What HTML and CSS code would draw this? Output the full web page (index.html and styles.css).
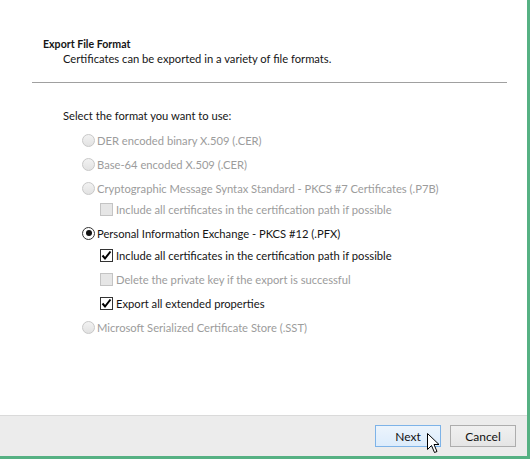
FILE: index.html
```html
<!DOCTYPE html>
<html>
<head>
<meta charset="utf-8">
<link rel="stylesheet" href="styles.css">
</head>
<body>
<div class="window">
  <div class="content">
    <div class="header">
      <div class="title">Export File Format</div>
      <div class="subtitle">Certificates can be exported in a variety of file formats.</div>
    </div>
    <div class="sep"></div>
    <div class="prompt">Select the format you want to use:</div>
    <div class="options">
      <div class="row radio-row disabled"><span class="radio"></span><span>DER encoded binary X.509 (.CER)</span></div>
      <div class="row radio-row disabled"><span class="radio"></span><span>Base-64 encoded X.509 (.CER)</span></div>
      <div class="row radio-row disabled"><span class="radio"></span><span>Cryptographic Message Syntax Standard - PKCS #7 Certificates (.P7B)</span></div>
      <div class="row sub-row first-sub tight disabled"><span class="check"></span><span>Include all certificates in the certification path if possible</span></div>
      <div class="row radio-row"><span class="radio checked"></span><span>Personal Information Exchange - PKCS #12 (.PFX)</span></div>
      <div class="row sub-row first-sub"><span class="check checked"><svg viewBox="0 0 13 13" width="13" height="13"><path d="M2.5 6.5 L5 9.5 L10.5 2.5" fill="none" stroke="#000" stroke-width="2"/></svg></span><span>Include all certificates in the certification path if possible</span></div>
      <div class="row sub-row disabled"><span class="check"></span><span>Delete the private key if the export is successful</span></div>
      <div class="row sub-row"><span class="check checked"><svg viewBox="0 0 13 13" width="13" height="13"><path d="M2.5 6.5 L5 9.5 L10.5 2.5" fill="none" stroke="#000" stroke-width="2"/></svg></span><span>Export all extended properties</span></div>
      <div class="row radio-row disabled"><span class="radio"></span><span>Microsoft Serialized Certificate Store (.SST)</span></div>
    </div>
  </div>
  <div class="footer">
    <button class="btn primary">Next</button>
    <button class="btn">Cancel</button>
    <svg class="cursor" viewBox="0 0 13 21" width="13" height="21"><path d="M0.5 0.5 L0.5 16.5 L4.5 12.5 L7.5 19.5 L10 18.5 L7 11.5 L12 11.5 Z" fill="#fff" stroke="#000" stroke-width="1"/></svg>
  </div>
</div>
</body>
</html>
```
FILE: styles.css
```css
html, body {
  margin: 0;
  padding: 0;
  background: #fff;
}
body {
  font-family: Lato, "Noto Sans", sans-serif;
  font-size: 11.2px;
  color: #151515;
}
.window {
  width: 527px;
  height: 456px;
  border-right: 3px solid #56b183;
  border-bottom: 3px solid #56b183;
  display: flex;
  flex-direction: column;
  background: #fff;
}
.content {
  flex: 1;
  display: flex;
  flex-direction: column;
}
.header {
  padding-top: 37px;
}
.title {
  margin-left: 43px;
  height: 14px;
  line-height: 14px;
  font-weight: bold;
  font-size: 10.6px;
}
.subtitle {
  margin-left: 63px;
  height: 16px;
  line-height: 16px;
}
.sep {
  height: 1px;
  background: #a0a0a0;
  margin: 15px 20px 0 32px;
}
.prompt {
  margin: 25px 0 0 63px;
  height: 16px;
  line-height: 16px;
}
.options {
  margin-top: 4px;
  display: flex;
  flex-direction: column;
}
.row {
  height: 24px;
  display: flex;
  align-items: center;
  white-space: nowrap;
}
.radio-row {
  padding-left: 82px;
  gap: 2px;
}
.sub-row {
  padding-left: 100px;
  gap: 3px;
}
.first-sub {
  margin-top: -2px;
}
.first-sub.tight {
  margin-top: -3px;
}
.disabled {
  color: #9c9c9c;
}
.radio {
  width: 11px;
  height: 11px;
  border-radius: 50%;
  border: 1px solid #333;
  background: #fff;
  position: relative;
  flex: none;
}
.disabled .radio {
  border-color: #c8c8c8;
  background: linear-gradient(#f2f2f2, #e2e2e2);
}
.radio.checked::after {
  content: "";
  position: absolute;
  left: 2.5px;
  top: 2.5px;
  width: 6px;
  height: 6px;
  border-radius: 50%;
  background: #111;
}
.check {
  width: 11px;
  height: 11px;
  border: 1px solid #333;
  background: #fff;
  position: relative;
  flex: none;
}
.check svg {
  position: absolute;
  left: -1px;
  top: -1px;
}
.disabled .check {
  border-color: #c4c4c4;
  background: #e6e6e6;
}
.footer {
  border-top: 1px solid #dadada;
  background: #ececec;
  display: flex;
  justify-content: flex-end;
  align-items: flex-start;
  padding: 9px 11px 0 0;
  box-sizing: border-box;
  height: 41px;
  gap: 9px;
  position: relative;
}
.btn {
  width: 66px;
  height: 22px;
  font-family: inherit;
  font-size: 12px;
  color: #111;
  border: 1px solid #adadad;
  background: linear-gradient(#f0f0f0, #e5e5e5);
  padding: 0;
  margin: 0;
}
.btn.primary {
  border-color: #7db3e8;
  background: linear-gradient(#ecf4fc, #dcecfc);
}
.cursor {
  position: absolute;
  left: 427px;
  top: 17px;
}
```
